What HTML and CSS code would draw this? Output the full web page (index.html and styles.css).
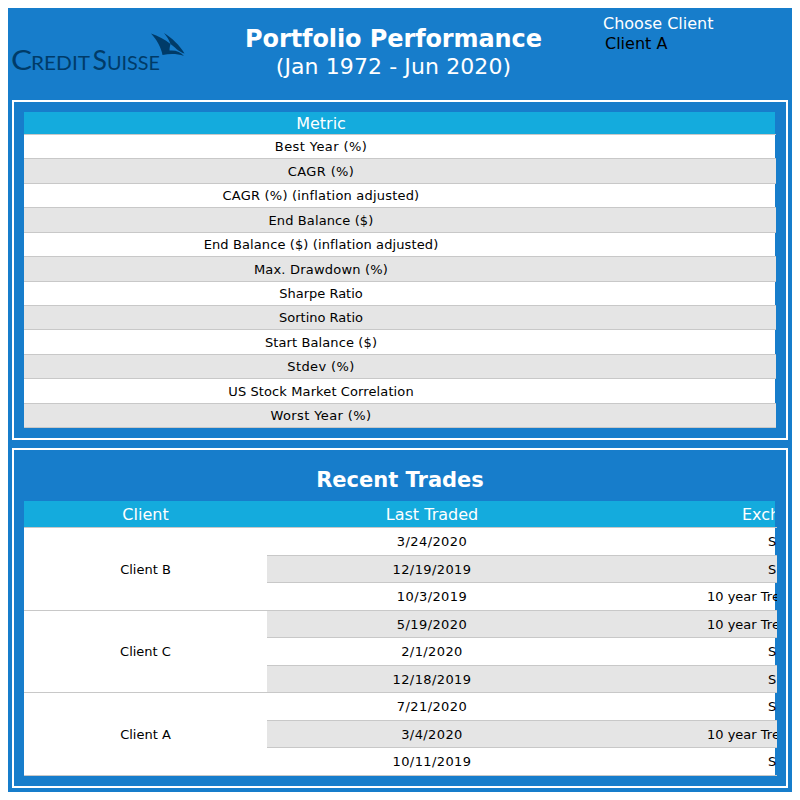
FILE: index.html
```html
<!DOCTYPE html>
<html lang="en">
<head>
<meta charset="utf-8">
<title>Portfolio Performance</title>
<link rel="stylesheet" href="styles.css">
</head>
<body>
<div class="dashboard">
  <header class="header">
    <svg class="logo" width="180" height="46" viewBox="8 30 180 46" role="img" aria-label="Credit Suisse">
      <g class="wordmark">
        <text x="11" y="70" textLength="21" lengthAdjust="spacingAndGlyphs" class="cap">C</text>
        <text x="31" y="70" textLength="59" lengthAdjust="spacingAndGlyphs">REDIT</text>
        <text x="92.500" y="70" textLength="14.500" lengthAdjust="spacingAndGlyphs" class="cap">S</text>
        <text x="107" y="70" textLength="53" lengthAdjust="spacingAndGlyphs">UISSE</text>
      </g>
      <path class="sail" d="M151 33.500C158 36 165 39.500 170.500 44C170 46 169.500 48 169.500 50.500C176 50 181 52 184 56C177 53.500 170 53.500 162.500 55C161 47 157 40 151 33.500Z"/>
      <path class="sail" d="M164 33C172 38 180 45.500 184.500 53.500C178 51.500 175 47 170.500 44C169 40 167 36.500 164 33Z"/>
    </svg>
    <div class="heading">
      <h1>Portfolio Performance</h1>
      <p>(Jan 1972 - Jun 2020)</p>
    </div>
    <div class="picker">
      <div class="picker-label">Choose Client</div>
      <div class="picker-value">Client A</div>
    </div>
  </header>

  <section class="panel">
    <div class="metrics">
      <div class="metric-head"><span>Metric</span></div>
      <div class="metric wide"><span>Best Year (%)</span></div>
      <div class="metric wide"><span>CAGR (%)</span></div>
      <div class="metric medium"><span>CAGR (%) (inflation adjusted)</span></div>
      <div class="metric slight"><span>End Balance ($)</span></div>
      <div class="metric slight"><span>End Balance ($) (inflation adjusted)</span></div>
      <div class="metric medium"><span>Max. Drawdown (%)</span></div>
      <div class="metric"><span>Sharpe Ratio</span></div>
      <div class="metric"><span>Sortino Ratio</span></div>
      <div class="metric slight"><span>Start Balance ($)</span></div>
      <div class="metric wide"><span>Stdev (%)</span></div>
      <div class="metric slight"><span>US Stock Market Correlation</span></div>
      <div class="metric wide"><span>Worst Year (%)</span></div>
    </div>
  </section>

  <section class="panel">
    <h2>Recent Trades</h2>
    <div class="trades-head"><span>Client</span><span>Last Traded</span><span class="exchange">Exch</span></div>
    <div class="trades">
      <div class="clients">
        <div>Client B</div><div>Client C</div><div>Client A</div>
      </div>
      <div class="rows">
        <div class="trade"><span class="date">3/24/2020</span><span class="asset short">S</span></div>
        <div class="trade"><span class="date">12/19/2019</span><span class="asset short">S</span></div>
        <div class="trade"><span class="date">10/3/2019</span><span class="asset">10 year Tre</span></div>
        <div class="trade"><span class="date">5/19/2020</span><span class="asset">10 year Tre</span></div>
        <div class="trade"><span class="date">2/1/2020</span><span class="asset short">S</span></div>
        <div class="trade"><span class="date">12/18/2019</span><span class="asset short">S</span></div>
        <div class="trade"><span class="date">7/21/2020</span><span class="asset short">S</span></div>
        <div class="trade"><span class="date">3/4/2020</span><span class="asset">10 year Tre</span></div>
        <div class="trade"><span class="date">10/11/2019</span><span class="asset short">S</span></div>
      </div>
    </div>
  </section>
</div>
</body>
</html>
```
FILE: styles.css
```css
* { box-sizing: border-box; }
body { margin: 8px; background: #fff; color: #000; font: 13px "DejaVu Sans", Verdana, sans-serif; overflow: hidden; }
h1, h2, p { margin: 0; }

.dashboard { width: 784px; height: 784px; background: #177dcb; padding: 0 4px 4px; display: flex; flex-direction: column; gap: 8px; }

.header { height: 84px; display: grid; grid-template-columns: 180px 404px 1fr; margin: 0 -4px; color: #fff; }
.logo { margin-top: 22px; }
.wordmark { font-family: Lato, sans-serif; font-size: 20px; fill: #003b68; }
.wordmark .cap { font-size: 26px; }
.sail { fill: #003b68; }
.heading { text-align: center; padding: 16px 0 0 7px; }
.heading h1 { font-size: 24px; line-height: 30px; white-space: nowrap; letter-spacing: -0.1px; }
.heading p { font-size: 22px; line-height: 25px; letter-spacing: 0.1px; }
.picker { font-size: 16px; line-height: 20px; padding: 6px 0 0 11px; }
.picker-value { color: #000; padding-left: 2px; }

.panel { border: 2px solid #fff; height: 340px; padding: 10px; }

.metric-head, .metric { border-bottom: 1px solid #c8c8c8; display: flex; width: 752px; }
.metric-head span, .metric span { width: 594px; text-align: center; }
.metric-head { height: 23px; line-height: 24px; font-size: 16px; color: #fff; background: linear-gradient(90deg, #14abdd 751px, transparent 751px); }
.metric { height: 24px; line-height: 23px; background: linear-gradient(90deg, #fff 751px, transparent 751px); }
.metric:nth-child(odd) { height: 25px; line-height: 25px; background: #e5e5e5; }
.metric:nth-child(9) { height: 24px; line-height: 23px; }
.metric:nth-child(10) { height: 25px; line-height: 25px; }
.metric:nth-child(11) { height: 24px; line-height: 23px; }
.metric:nth-child(12) { height: 25px; line-height: 25px; }
.metric:nth-child(13) { height: 24px; line-height: 23px; }
.wide { letter-spacing: 0.4px; }
.medium { letter-spacing: 0.2px; }
.slight { letter-spacing: 0.11px; }

h2 { font-size: 21px; line-height: 41px; height: 41px; text-align: center; }
.panel h2 { color: #fff; }
.trades-head { display: grid; grid-template-columns: 243px 330px 180px; width: 753px; height: 27px; line-height: 28px; font-size: 16px; color: #fff; text-align: center; background: linear-gradient(90deg, #14abdd 751px, transparent 751px); border-bottom: 1px solid #c8c8c8; }
.trades-head .exchange { text-align: left; padding-left: 145px; width: 178px; height: 26px; overflow: hidden; }
.trades { display: grid; grid-template-columns: 243px 510px; }
.clients div { height: 83px; display: flex; align-items: center; justify-content: center; background: #fff; border-bottom: 1px solid #c8c8c8; }
.clients div:nth-child(2) { height: 82px; }
.trade { display: grid; grid-template-columns: 330px 180px; height: 27px; line-height: 27px; text-align: center; border-bottom: 1px solid #c8c8c8; overflow: hidden; background: linear-gradient(90deg, #fff 508px, transparent 508px); }
.trade:nth-child(odd) { height: 28px; }
.trade:nth-child(even) { background: #e5e5e5; }
.trade .date { letter-spacing: 0.4px; }
.trade .asset { text-align: left; padding-left: 110px; white-space: nowrap; overflow: hidden; }
.trade .short { padding-left: 171px; }
```
